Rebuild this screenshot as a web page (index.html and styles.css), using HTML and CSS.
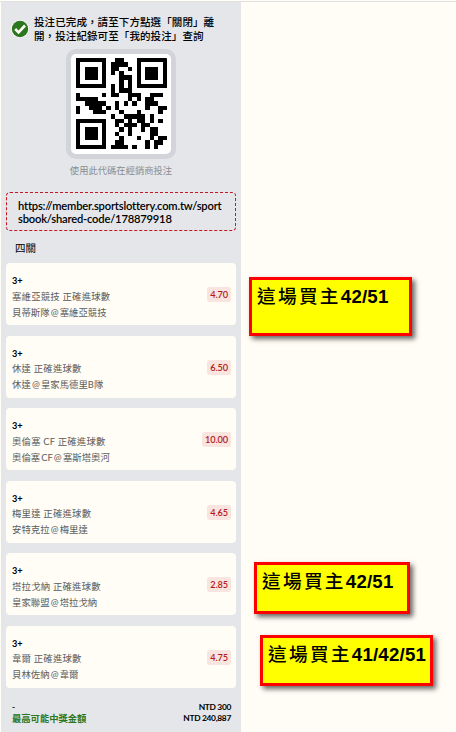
FILE: index.html
```html
<!DOCTYPE html>
<html lang="zh-Hant">
<head>
    <meta charset="UTF-8">
    <meta name="viewport" content="width=device-width, initial-scale=1.0">
    <title>投注已完成</title>
    <link rel="stylesheet" href="styles.css">
</head>
<body>

    <!-- Bet slip -->
    <main class="slip">
        <header class="status">
            <svg class="check" viewBox="0 0 18 18">
                <circle cx="9" cy="9" r="9" fill="#fffdf5"/>
                <circle cx="9" cy="9" r="8.2" fill="#2d7620"/>
                <path d="M4.2 9 L7.6 12.4 L14 5.5" fill="none" stroke="#fffdf5" stroke-width="2.6"/>
            </svg>
            <p>投注已完成，請至下方點選「關閉」離<br>開，投注紀錄可至「我的投注」查詢</p>
        </header>

        <div class="qr-box">
            <svg id="qr" viewBox="0 0 21 21" data-code="178879918"></svg>
        </div>
        <p class="qr-hint">使用此代碼在經銷商投注</p>

        <div class="link">https://member.sportslottery.com.tw/sport<br>sbook/shared-code/178879918</div>

        <h2>四關</h2>

        <section class="bets">
            <article class="bet">
                <div class="info">
                    <strong>3+</strong>
                    <p>塞維亞競技 正確進球數</p>
                    <p>貝蒂斯隊 @ 塞維亞競技</p>
                </div>
                <span class="odds">4.70</span>
            </article>
            <article class="bet">
                <div class="info">
                    <strong>3+</strong>
                    <p>休達 正確進球數</p>
                    <p>休達 @ 皇家馬德里B隊</p>
                </div>
                <span class="odds">6.50</span>
            </article>
            <article class="bet">
                <div class="info">
                    <strong>3+</strong>
                    <p>奧倫塞 CF 正確進球數</p>
                    <p>奧倫塞 CF @ 塞斯塔奧河</p>
                </div>
                <span class="odds">10.00</span>
            </article>
            <article class="bet">
                <div class="info">
                    <strong>3+</strong>
                    <p>梅里達 正確進球數</p>
                    <p>安特克拉 @ 梅里達</p>
                </div>
                <span class="odds">4.65</span>
            </article>
            <article class="bet">
                <div class="info">
                    <strong>3+</strong>
                    <p>塔拉戈納 正確進球數</p>
                    <p>皇家聯盟 @ 塔拉戈納</p>
                </div>
                <span class="odds">2.85</span>
            </article>
            <article class="bet">
                <div class="info">
                    <strong>3+</strong>
                    <p>韋爾 正確進球數</p>
                    <p>貝林佐納 @ 韋爾</p>
                </div>
                <span class="odds">4.75</span>
            </article>
        </section>

        <footer class="total">
            <div class="row"><span>-</span><span>NTD 300</span></div>
            <div class="row"><span class="win">最高可能中獎金額</span><span>NTD 240,887</span></div>
        </footer>
    </main>

    <!-- Sticky notes -->
    <aside class="note note-1">這場買主<b>42/51</b></aside>
    <aside class="note note-2">這場買主<b>42/51</b></aside>
    <aside class="note note-3">這場買主<b>41/42/51</b></aside>

    <script src="qr.js"></script>
</body>
</html>
```
FILE: styles.css
```css
* {
    box-sizing: border-box;
}

body {
    margin: 0;
    height: 732px;
    overflow: hidden;
    position: relative;
    background: #fffdf5;
    border-top: 1px solid #fffdf5;
    font-family: Lato, "Noto Sans CJK TC", sans-serif;
    color: #000;
}

body::before {
    content: "";
    display: block;
    height: 1px;
    background: #dfe2e0;
}

p, h2 {
    margin: 0;
}

/* Slip */
.slip {
    width: 240px;
    height: 730px;
    margin-left: 1px;
    padding: 13px 5px 0;
    background: #e4e6ea;
}

.status {
    display: flex;
    padding-left: 5px;
    height: 34px;
}

.status p {
    margin-left: 5px;
    font-size: 10.5px;
    font-weight: 500;
    line-height: 14px;
    letter-spacing: 0.1px;
    white-space: nowrap;
}

.check {
    width: 18px;
    height: 18px;
    margin-top: 5px;
    flex: none;
}

.qr-box {
    width: 110px;
    height: 110px;
    margin: 0 auto;
    padding: 5px;
    background: #d2d4da;
    border-radius: 10px;
}

#qr {
    display: block;
    width: 100px;
    height: 100px;
    padding: 4px 4px 5px 5px;
    background: #fff;
    border-radius: 5px;
}

.qr-hint {
    margin-top: 5px;
    font-size: 9.3px;
    line-height: 14px;
    text-align: center;
    color: #8b8c8f;
}

.link {
    height: 39px;
    margin-top: 14px;
    padding: 6px 11px;
    border: 1px dashed #c4161c;
    border-radius: 4px;
    font-size: 11.2px;
    font-weight: 600;
    line-height: 13px;
    letter-spacing: -0.2px;
    white-space: nowrap;
}

h2 {
    margin: 9px 0 7px 9px;
    font-size: 10.5px;
    font-weight: 400;
    line-height: 16px;
}

/* Bets */
.bets {
    display: grid;
    gap: 10.6px;
}

.bet {
    display: flex;
    justify-content: space-between;
    height: 62px;
    padding: 10px 5px 0 6px;
    background: #fffdf5;
    border-radius: 4px;
}

.info strong {
    display: block;
    font-size: 9.2px;
    line-height: 15.5px;
}

.info p {
    font-size: 9.4px;
    line-height: 16px;
    letter-spacing: 0.2px;
    color: #5c5c5c;
}

.info p:last-child {
    letter-spacing: 0;
    word-spacing: -1.2px;
}

.odds {
    height: 15px;
    margin-top: 14px;
    padding: 0 3px;
    background: #f9e5df;
    border-radius: 3px;
    font-size: 9.2px;
    font-weight: 600;
    line-height: 15px;
    letter-spacing: -0.1px;
    color: #b5191b;
}

/* Total */
.total {
    padding: 14px 5px 0 6px;
    font-size: 8.4px;
    font-weight: 700;
    letter-spacing: -0.3px;
}

.row {
    display: flex;
    justify-content: space-between;
    line-height: 11px;
}

.win {
    font-size: 9.3px;
    letter-spacing: 0;
    color: #2d7620;
}

/* Notes */
.note {
    position: absolute;
    padding: 5px;
    background: #ffff00;
    border: 3px solid #ff0000;
    box-shadow: 3px 3px 5px rgba(0, 0, 0, 0.6);
    font-family: "Liberation Sans", "Noto Sans CJK TC", sans-serif;
    font-size: 18.67px;
    font-weight: 500;
    line-height: 24px;
    letter-spacing: 2.3px;
    white-space: nowrap;
}

.note b {
    letter-spacing: 0.2px;
}

.note-1 {
    left: 249px;
    top: 276px;
    width: 163px;
    height: 59px;
}

.note-2 {
    left: 254px;
    top: 561px;
    width: 156px;
    height: 52px;
}

.note-3 {
    left: 260px;
    top: 634px;
    width: 173px;
    height: 51px;
}
```
FILE: qr.js
```js
// QR code, version 1-M, numeric mode, mask 5
const svg = document.getElementById('qr');
const code = svg.dataset.code;
const size = 21;

// Data bits
let bits = '0001' + code.length.toString(2).padStart(10, '0');
for (let i = 0; i < code.length; i += 3) {
    bits += Number(code.slice(i, i + 3)).toString(2).padStart(10, '0');
}
bits += '0000';
while (bits.length % 8) bits += '0';
const data = bits.match(/.{8}/g).map(b => parseInt(b, 2));
for (let pad = 236; data.length < 16; pad ^= 236 ^ 17) data.push(pad);

// Error correction
function mul(a, b) {
    let r = 0;
    while (b) {
        if (b & 1) r ^= a;
        a <<= 1;
        if (a & 256) a ^= 285;
        b >>= 1;
    }
    return r;
}

let gen = [1];
for (let i = 0, root = 1; i < 10; i++, root = mul(root, 2)) {
    const next = [...gen, 0];
    gen.forEach((g, j) => next[j + 1] ^= mul(g, root));
    gen = next;
}
const rem = [...data, ...new Array(10).fill(0)];
for (let i = 0; i < 16; i++) {
    const f = rem[i];
    gen.forEach((g, j) => rem[i + j] ^= mul(g, f));
}
const stream = [...data, ...rem.slice(16)].map(n => n.toString(2).padStart(8, '0')).join('');

// Fixed patterns
const grid = Array.from({ length: size }, () => new Array(size).fill(null));

function finder(row, col) {
    for (let r = -1; r < 8; r++) {
        for (let c = -1; c < 8; c++) {
            if (!grid[row + r] || grid[row + r][col + c] === undefined) continue;
            const d = Math.max(Math.abs(r - 3), Math.abs(c - 3));
            grid[row + r][col + c] = d === 3 || d < 2 ? 1 : 0;
        }
    }
}
finder(0, 0);
finder(0, 14);
finder(14, 0);

for (let i = 8; i < 13; i++) {
    grid[6][i] = grid[i][6] = 1 - i % 2;
}

const format = '100000011001110';
const left = [[8, 0], [8, 1], [8, 2], [8, 3], [8, 4], [8, 5], [8, 7], [8, 8], [7, 8], [5, 8], [4, 8], [3, 8], [2, 8], [1, 8], [0, 8]];
left.forEach(([r, c], i) => {
    grid[r][c] = Number(format[i]);
    if (i < 7) grid[20 - i][8] = Number(format[i]);
    else grid[8][6 + i] = Number(format[i]);
});
grid[13][8] = 1;

// Zigzag placement
let n = 0;
let up = true;
for (let col = 20; col > 0; col -= 2) {
    if (col === 6) col--;
    for (let i = 0; i < size; i++) {
        const r = up ? 20 - i : i;
        for (const c of [col, col - 1]) {
            if (grid[r][c] !== null) continue;
            const flip = (r * c) % 6 === 0 ? 1 : 0;
            grid[r][c] = Number(stream[n++]) ^ flip;
        }
    }
    up = !up;
}

let d = '';
grid.forEach((row, r) => row.forEach((v, c) => {
    if (v) d += `M${c} ${r}h1v1h-1z`;
}));
const path = document.createElementNS('http://www.w3.org/2000/svg', 'path');
path.setAttribute('d', d);
path.setAttribute('shape-rendering', 'crispEdges');
svg.appendChild(path);
```
